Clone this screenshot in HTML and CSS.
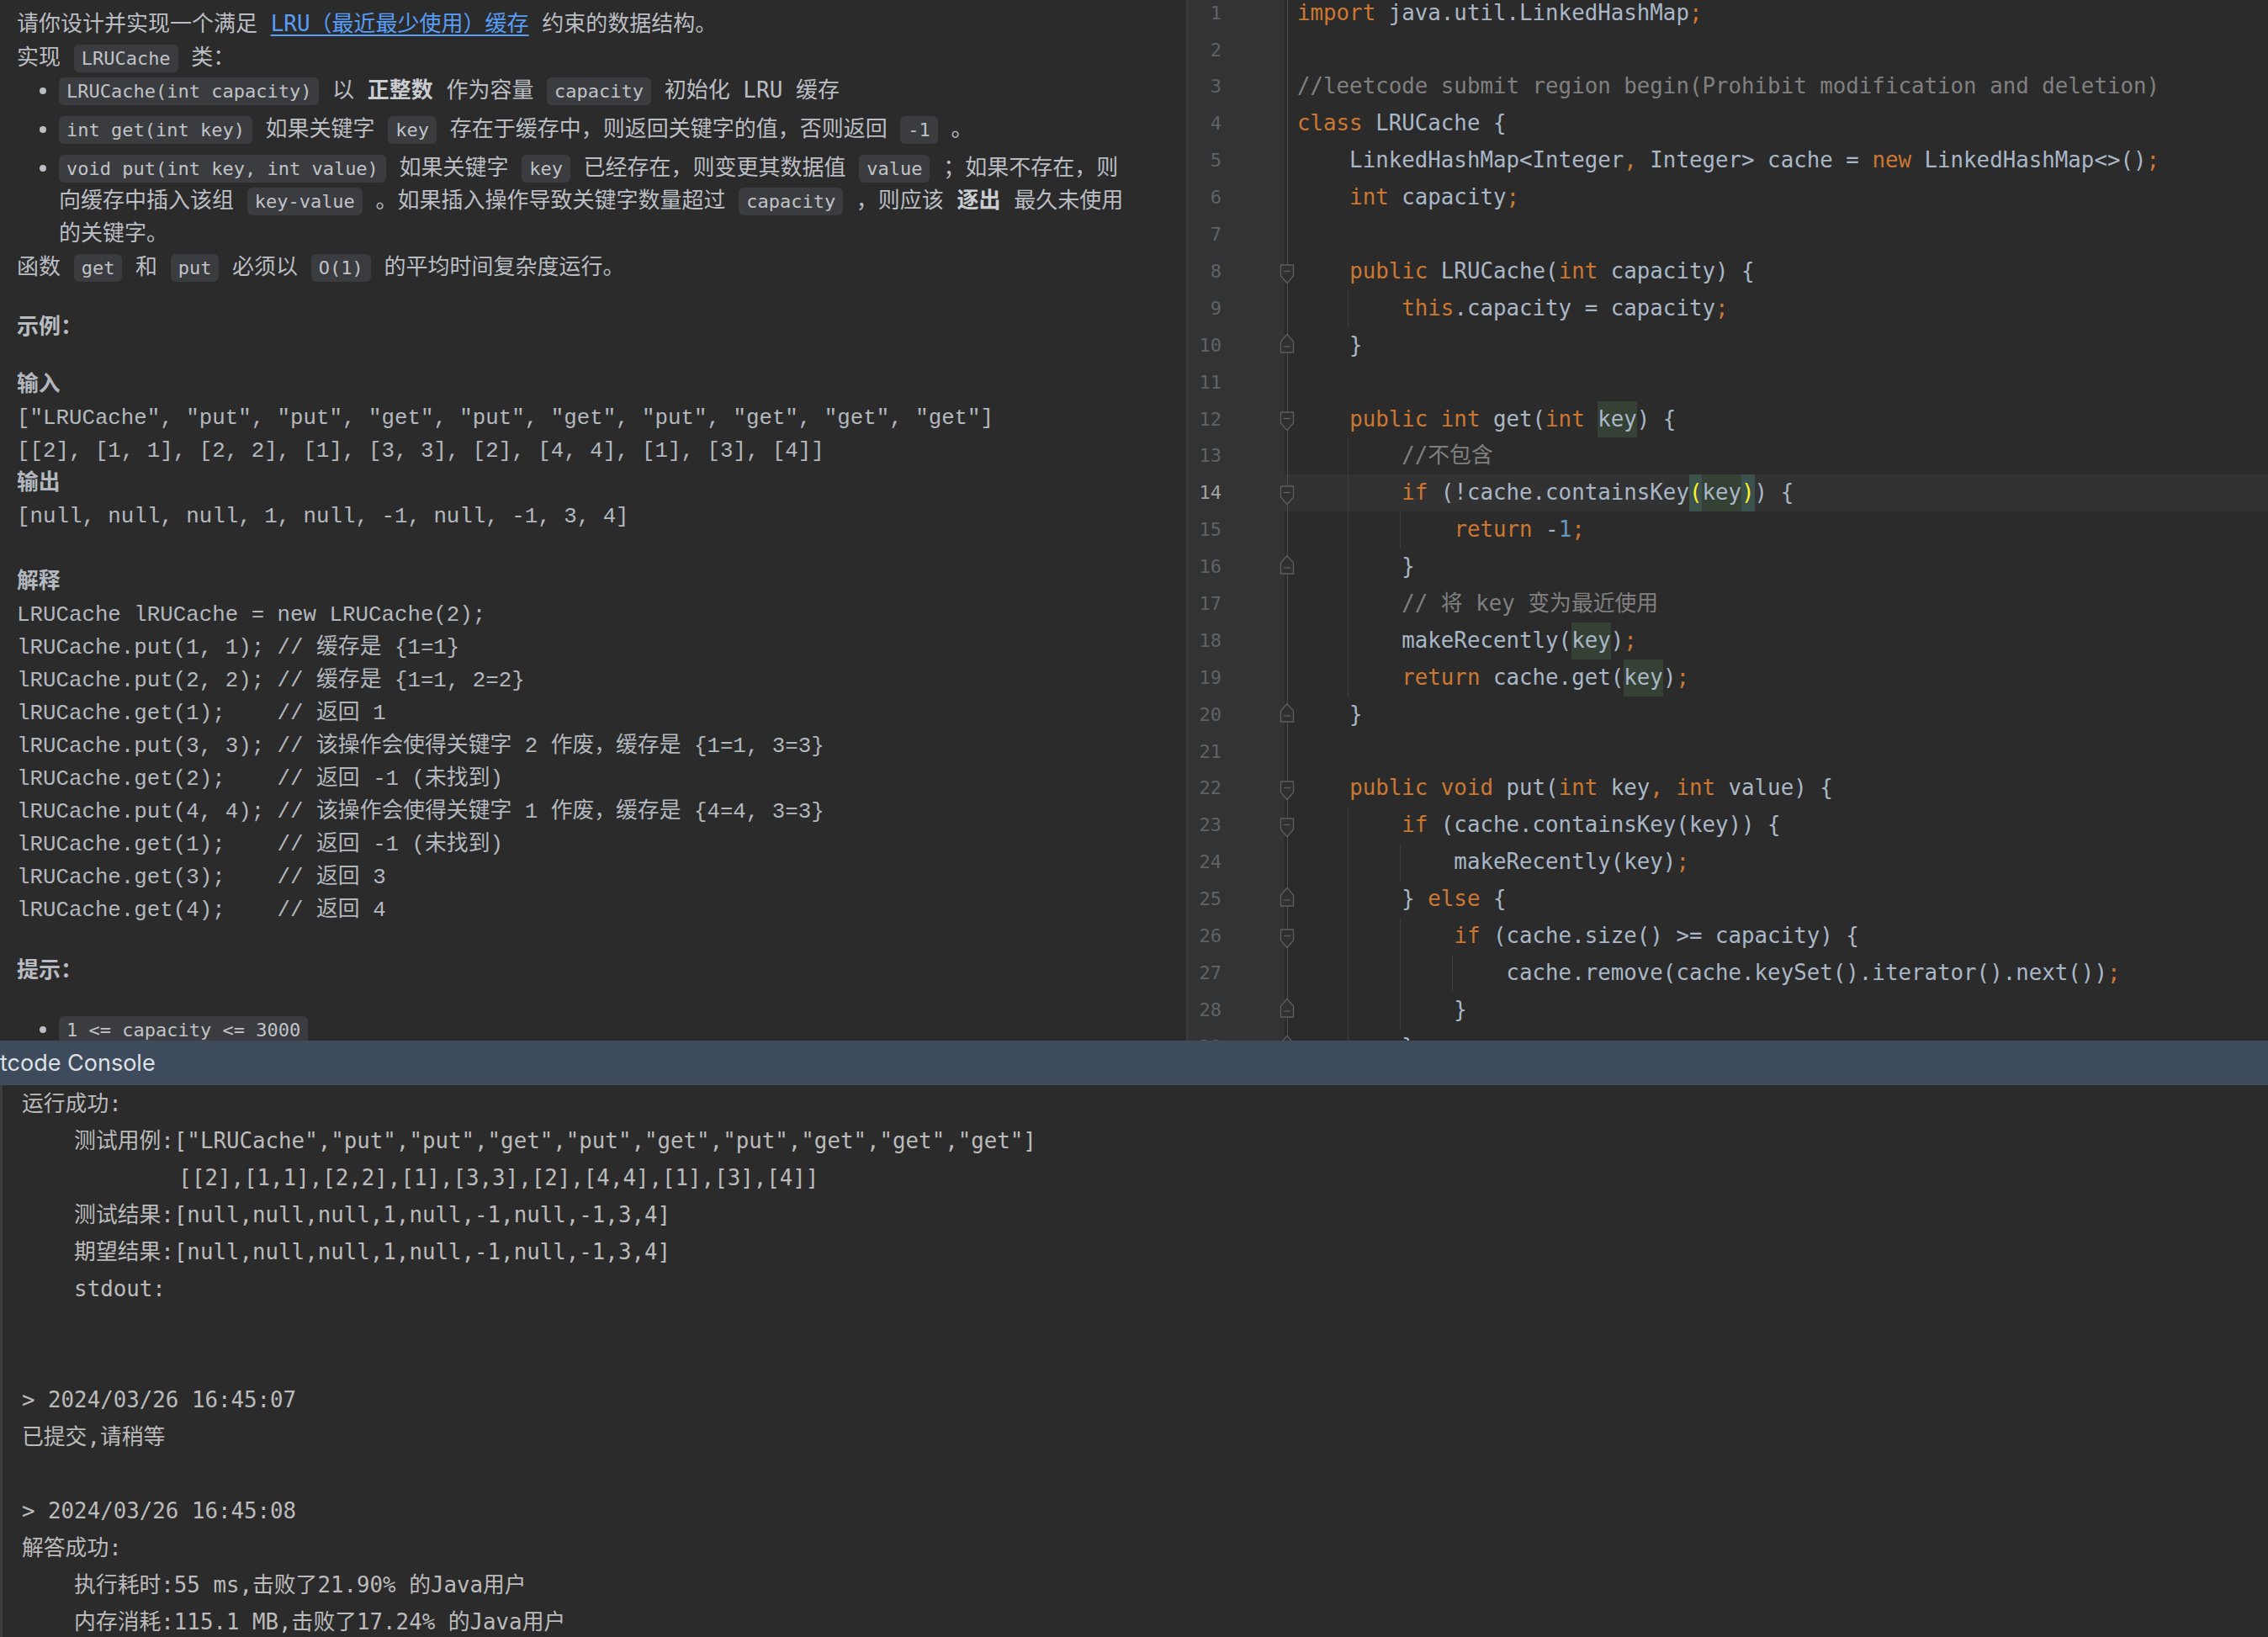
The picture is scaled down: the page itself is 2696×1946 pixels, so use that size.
FILE: index.html
```html
<!DOCTYPE html>
<html lang="zh-CN">
<head>
<meta charset="utf-8">
<title>LRU Cache</title>
<link rel="stylesheet" href="styles.css">
</head>
<body>
<div class="app">
  <div class="top">
    <section class="desc">
      <p>请你设计并实现一个满足 <a href="#">LRU（最近最少使用）缓存</a> 约束的数据结构。</p>
      <p>实现 <code>LRUCache</code> 类：</p>
      <ul class="list">
        <li><code>LRUCache(int capacity)</code> 以 <strong>正整数</strong> 作为容量 <code>capacity</code> 初始化 LRU 缓存</li>
        <li><code>int get(int key)</code> 如果关键字 <code>key</code> 存在于缓存中，则返回关键字的值，否则返回 <code>-1</code> 。</li>
        <li><code>void put(int key, int value)</code> 如果关键字 <code>key</code> 已经存在，则变更其数据值 <code>value</code> ；如果不存在，则向缓存中插入该组 <code>key-value</code> 。如果插入操作导致关键字数量超过 <code>capacity</code> ，则应该 <strong>逐出</strong> 最久未使用的关键字。</li>
      </ul>
      <p>函数 <code>get</code> 和 <code>put</code> 必须以 <code>O(1)</code> 的平均时间复杂度运行。</p>
      <p class="heading">示例：</p>
<pre class="example"><b>输入</b>
["LRUCache", "put", "put", "get", "put", "get", "put", "get", "get", "get"]
[[2], [1, 1], [2, 2], [1], [3, 3], [2], [4, 4], [1], [3], [4]]
<b>输出</b>
[null, null, null, 1, null, -1, null, -1, 3, 4]

<b>解释</b>
LRUCache lRUCache = new LRUCache(2);
lRUCache.put(1, 1); // 缓存是 {1=1}
lRUCache.put(2, 2); // 缓存是 {1=1, 2=2}
lRUCache.get(1);    // 返回 1
lRUCache.put(3, 3); // 该操作会使得关键字 2 作废，缓存是 {1=1, 3=3}
lRUCache.get(2);    // 返回 -1 (未找到)
lRUCache.put(4, 4); // 该操作会使得关键字 1 作废，缓存是 {4=4, 3=3}
lRUCache.get(1);    // 返回 -1 (未找到)
lRUCache.get(3);    // 返回 3
lRUCache.get(4);    // 返回 4</pre>
      <p class="heading tip">提示：</p>
      <ul class="list tips">
        <li><code>1 &lt;= capacity &lt;= 3000</code></li>
      </ul>
    </section>

    <section class="editor">
      <div class="lines">
        <div class="row"><div class="ln">1</div><div class="code"><span class="k">import</span> java.util.LinkedHashMap<span class="k">;</span></div></div>
        <div class="row"><div class="ln">2</div><div class="code"></div></div>
        <div class="row"><div class="ln">3</div><div class="code"><span class="c">//leetcode submit region begin(Prohibit modification and deletion)</span></div></div>
        <div class="row"><div class="ln">4</div><div class="code"><span class="k">class</span> LRUCache {</div></div>
        <div class="row"><div class="ln">5</div><div class="code">    LinkedHashMap&lt;Integer<span class="k">,</span> Integer&gt; cache = <span class="k">new</span> LinkedHashMap&lt;&gt;()<span class="k">;</span></div></div>
        <div class="row"><div class="ln">6</div><div class="code">    <span class="k">int</span> capacity<span class="k">;</span></div></div>
        <div class="row"><div class="ln">7</div><div class="code"></div></div>
        <div class="row"><div class="ln">8<svg class="fold" viewBox="0 0 18 30"><path d="M1.5 7H16.5V20L9 28.5L1.5 20Z"/><path d="M5 14.5H13"/></svg></div><div class="code">    <span class="k">public</span> LRUCache(<span class="k">int</span> capacity) {</div></div>
        <div class="row"><div class="ln">9</div><div class="code g1">        <span class="k">this</span>.capacity = capacity<span class="k">;</span></div></div>
        <div class="row"><div class="ln">10<svg class="fold" viewBox="0 0 18 30"><path d="M9 1.5L16.5 10V23H1.5V10Z"/><path d="M5 16H13"/></svg></div><div class="code">    }</div></div>
        <div class="row"><div class="ln">11</div><div class="code"></div></div>
        <div class="row"><div class="ln">12<svg class="fold" viewBox="0 0 18 30"><path d="M1.5 7H16.5V20L9 28.5L1.5 20Z"/><path d="M5 14.5H13"/></svg></div><div class="code">    <span class="k">public int</span> get(<span class="k">int</span> <span class="hl">key</span>) {</div></div>
        <div class="row"><div class="ln">13</div><div class="code g1">        <span class="c">//不包含</span></div></div>
        <div class="row cur"><div class="ln">14<svg class="fold" viewBox="0 0 18 30"><path d="M1.5 7H16.5V20L9 28.5L1.5 20Z"/><path d="M5 14.5H13"/></svg></div><div class="code g1">        <span class="k">if</span> (!cache.containsKey<span class="bm">(</span><span class="hl">key</span><span class="bm">)</span>) {</div></div>
        <div class="row"><div class="ln">15</div><div class="code g12">            <span class="k">return</span> -<span class="n">1</span><span class="k">;</span></div></div>
        <div class="row"><div class="ln">16<svg class="fold" viewBox="0 0 18 30"><path d="M9 1.5L16.5 10V23H1.5V10Z"/><path d="M5 16H13"/></svg></div><div class="code g1">        }</div></div>
        <div class="row"><div class="ln">17</div><div class="code g1">        <span class="c">// 将 key 变为最近使用</span></div></div>
        <div class="row"><div class="ln">18</div><div class="code g1">        makeRecently(<span class="hl">key</span>)<span class="k">;</span></div></div>
        <div class="row"><div class="ln">19</div><div class="code g1">        <span class="k">return</span> cache.get(<span class="hl">key</span>)<span class="k">;</span></div></div>
        <div class="row"><div class="ln">20<svg class="fold" viewBox="0 0 18 30"><path d="M9 1.5L16.5 10V23H1.5V10Z"/><path d="M5 16H13"/></svg></div><div class="code">    }</div></div>
        <div class="row"><div class="ln">21</div><div class="code"></div></div>
        <div class="row"><div class="ln">22<svg class="fold" viewBox="0 0 18 30"><path d="M1.5 7H16.5V20L9 28.5L1.5 20Z"/><path d="M5 14.5H13"/></svg></div><div class="code">    <span class="k">public void</span> put(<span class="k">int</span> key<span class="k">,</span> <span class="k">int</span> value) {</div></div>
        <div class="row"><div class="ln">23<svg class="fold" viewBox="0 0 18 30"><path d="M1.5 7H16.5V20L9 28.5L1.5 20Z"/><path d="M5 14.5H13"/></svg></div><div class="code g1">        <span class="k">if</span> (cache.containsKey(key)) {</div></div>
        <div class="row"><div class="ln">24</div><div class="code g12">            makeRecently(key)<span class="k">;</span></div></div>
        <div class="row"><div class="ln">25<svg class="fold" viewBox="0 0 18 30"><path d="M9 1.5L16.5 10V23H1.5V10Z"/><path d="M5 16H13"/></svg></div><div class="code g1">        } <span class="k">else</span> {</div></div>
        <div class="row"><div class="ln">26<svg class="fold" viewBox="0 0 18 30"><path d="M1.5 7H16.5V20L9 28.5L1.5 20Z"/><path d="M5 14.5H13"/></svg></div><div class="code g12">            <span class="k">if</span> (cache.size() &gt;= capacity) {</div></div>
        <div class="row"><div class="ln">27</div><div class="code g123">                cache.remove(cache.keySet().iterator().next())<span class="k">;</span></div></div>
        <div class="row"><div class="ln">28<svg class="fold" viewBox="0 0 18 30"><path d="M9 1.5L16.5 10V23H1.5V10Z"/><path d="M5 16H13"/></svg></div><div class="code g12">            }</div></div>
        <div class="row"><div class="ln">29<svg class="fold" viewBox="0 0 18 30"><path d="M9 1.5L16.5 10V23H1.5V10Z"/><path d="M5 16H13"/></svg></div><div class="code g1">        }</div></div>
      </div>
    </section>
  </div>

  <section class="console">
    <div class="console-head">tcode Console</div>
    <div class="console-body">
      <div class="cl">运行成功:</div>
      <div class="cl">    测试用例:["LRUCache","put","put","get","put","get","put","get","get","get"]</div>
      <div class="cl">            [[2],[1,1],[2,2],[1],[3,3],[2],[4,4],[1],[3],[4]]</div>
      <div class="cl">    测试结果:[null,null,null,1,null,-1,null,-1,3,4]</div>
      <div class="cl">    期望结果:[null,null,null,1,null,-1,null,-1,3,4]</div>
      <div class="cl">    stdout:</div>
      <div class="cl"></div>
      <div class="cl"></div>
      <div class="cl">&gt; 2024/03/26 16:45:07</div>
      <div class="cl">已提交,请稍等</div>
      <div class="cl"></div>
      <div class="cl">&gt; 2024/03/26 16:45:08</div>
      <div class="cl">解答成功:</div>
      <div class="cl">    执行耗时:55 ms,击败了21.90% 的Java用户</div>
      <div class="cl">    内存消耗:115.1 MB,击败了17.24% 的Java用户</div>
    </div>
  </section>
</div>
</body>
</html>
```

FILE: styles.css
```css
* { box-sizing: border-box; }

html, body {
  margin: 0;
  background: #2b2b2b;
}

body {
  width: 2696px;
  height: 1946px;
  overflow: hidden;
}

.app {
  display: flex;
  flex-direction: column;
  height: 1946px;
}

.top {
  display: flex;
  height: 1237px;
  flex: none;
  overflow: hidden;
}

/* ---------- description panel ---------- */
.desc {
  width: 1410px;
  flex: none;
  padding: 8px 0 0 20px;
  color: #babdc2;
  font: 26px/40px "DejaVu Sans Mono", "Noto Sans CJK SC", monospace;
  overflow: hidden;
}

.desc p { margin: 0; }

.desc a {
  color: #589df6;
  text-decoration: underline;
  text-underline-offset: 4px;
}

.desc code {
  font: 22px/26px "DejaVu Sans Mono", monospace;
  background: #3b3c3f;
  color: #c0c3c8;
  border-radius: 6px;
  padding: 4px 9px;
}

.desc strong {
  font-weight: 700;
  color: #c9ccd1;
}

.list {
  margin: 0;
  padding-left: 50px;
  width: 1322px;
}

.list li { line-height: 39px; }
.list li + li { margin-top: 7px; }

.heading {
  margin-top: 31px !important;
  font-weight: 700;
  color: #b8bcc1;
}

.example {
  margin: 30.5px 0 0;
  font: 25.8px/39px "Liberation Mono", "Noto Sans CJK SC", monospace;
  color: #b3b8be;
}

.example b { font-weight: 700; }

.tip { margin-top: 31.5px !important; }
.tips { margin-top: 30.5px; }

/* ---------- editor ---------- */
.editor {
  flex: 1;
  border-left: 2px solid #3a3a3a;
  overflow: hidden;
  background: #2b2b2b;
}

.lines { margin-top: -6.3px; }

.row {
  display: flex;
  height: 43.9px;
}

.ln {
  position: relative;
  width: 115px;
  flex: none;
  padding-right: 75px;
  text-align: right;
  font: 22px/43.9px "DejaVu Sans Mono", monospace;
  color: #606366;
  background: #313335;
}

.fold {
  position: absolute;
  right: -11.5px;
  top: calc(50% - 15px);
  width: 18px;
  height: 30px;
  fill: #2f3031;
  stroke: #5e5e5e;
  stroke-width: 1.3;
}

.code {
  flex: 1;
  padding-left: 15px;
  white-space: pre;
  font: 25.8px/43.9px "DejaVu Sans Mono", "Noto Sans CJK SC", monospace;
  color: #a9b7c6;
  background-image: linear-gradient(#4d4d4d, #4d4d4d);
  background-size: 1px 100%;
  background-position: 3px 0;
  background-repeat: no-repeat;
}

.code.g1 {
  background-image: linear-gradient(#4d4d4d, #4d4d4d), linear-gradient(#3c3c3c, #3c3c3c);
  background-position: 3px 0, 74.5px 0;
}

.code.g12 {
  background-image: linear-gradient(#4d4d4d, #4d4d4d), linear-gradient(#3c3c3c, #3c3c3c), linear-gradient(#3c3c3c, #3c3c3c);
  background-position: 3px 0, 74.5px 0, 136.5px 0;
}

.code.g123 {
  background-image: linear-gradient(#4d4d4d, #4d4d4d), linear-gradient(#3c3c3c, #3c3c3c), linear-gradient(#3c3c3c, #3c3c3c), linear-gradient(#3c3c3c, #3c3c3c);
  background-position: 3px 0, 74.5px 0, 136.5px 0, 198.8px 0;
}

.row.cur .code { background-color: #323232; }
.row.cur .ln { color: #a4a3a3; }

.k { color: #cc7832; }
.c { color: #808080; }
.n { color: #6897bb; }

.hl {
  display: inline-block;
  background: #344134;
}

.bm {
  display: inline-block;
  background: #3b514d;
  color: #ffef28;
}

/* ---------- console ---------- */
.console {
  flex: 1;
  display: flex;
  flex-direction: column;
  overflow: hidden;
}

.console-head {
  height: 53px;
  flex: none;
  background: #3d4b5c;
  color: #dfe1e5;
  font: 27px/53px Inter, "Noto Sans", sans-serif;
}

.console-body {
  flex: 1;
  border-left: 3px solid #3b3d3f;
  padding-left: 23px;
  font: 25.8px/44px "DejaVu Sans Mono", "Noto Sans CJK SC", monospace;
  color: #bbbbbb;
  overflow: hidden;
}

.cl {
  height: 44px;
  white-space: pre;
}
```
